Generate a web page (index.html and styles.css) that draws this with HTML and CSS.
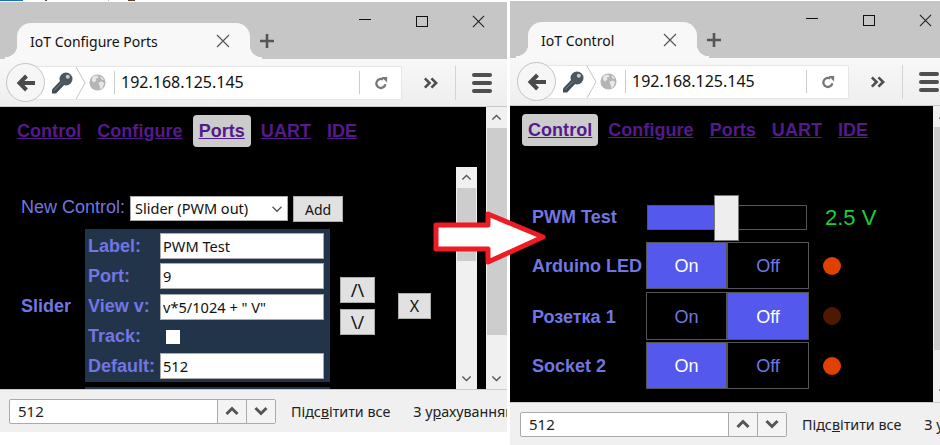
FILE: index.html
```html
<!DOCTYPE html>
<html lang="en">
<head>
  <meta charset="UTF-8">
  <title>IoT Control</title>
  <link rel="stylesheet" href="styles.css">
</head>
<body>
  <svg class="defs" width="0" height="0">
    <symbol id="i-x" viewBox="0 0 14 14"><path d="M1 1l12 12M13 1L1 13" fill="none" stroke="currentColor" stroke-width="1.2"/></symbol>
    <symbol id="i-plus" viewBox="0 0 16 16"><path d="M8 1v14M1 8h14" fill="none" stroke="currentColor" stroke-width="2.6"/></symbol>
    <symbol id="i-back" viewBox="0 0 20 20"><path d="M19 10H4M10.500 3l-7 7 7 7" fill="none" stroke="currentColor" stroke-width="4"/></symbol>
    <symbol id="i-key" viewBox="0 0 22 22"><path d="M10.500 7.500l4 4L5 21.500H1v-4z" fill="#414d55"/><circle cx="15" cy="7" r="6.500" fill="#4a5760"/><circle cx="16.800" cy="4.800" r="2" fill="#c3ccd3"/><path d="M3 18.500l8-8" stroke="#7c8a94" stroke-width="1"/></symbol>
    <symbol id="i-chevron" viewBox="0 0 11 32"><path d="M1 0l9 16L1 32" fill="none" stroke="#c4c4c4" stroke-width="1"/></symbol>
    <symbol id="i-globe" viewBox="0 0 18 18"><circle cx="9" cy="9" r="8.500" fill="#b5b5b5"/><path d="M4 3c2-1 4-1.500 5-1l1 2-3 1 1 2-3 2-2-2zM10 9l4-1 2 2-2 5-2 1-1-4zM12 2.500l3 2 .5 2-2.500-1z" fill="#e8e8e8"/></symbol>
    <symbol id="i-reload" viewBox="0 0 16 16"><path d="M13 9.500A5.200 5.200 0 1 1 10.500 4" fill="none" stroke="currentColor" stroke-width="2.600"/><path d="M8.500 1h6.500v6.500z" fill="currentColor"/></symbol>
    <symbol id="i-more" viewBox="0 0 16 12"><path d="M2 1l5 5-5 5M9 1l5 5-5 5" fill="none" stroke="currentColor" stroke-width="2.800"/></symbol>
    <symbol id="i-up" viewBox="0 0 16 10"><path d="M2 8l6-6 6 6" fill="none" stroke="currentColor" stroke-width="1.800"/></symbol>
    <symbol id="i-down" viewBox="0 0 16 10"><path d="M2 2l6 6 6-6" fill="none" stroke="currentColor" stroke-width="1.800"/></symbol>
    <symbol id="i-find-up" viewBox="0 0 14 10"><path d="M1.500 8L7 2.500 12.500 8" fill="none" stroke="currentColor" stroke-width="3"/></symbol>
    <symbol id="i-find-down" viewBox="0 0 14 10"><path d="M1.500 2L7 7.500 12.500 2" fill="none" stroke="currentColor" stroke-width="3"/></symbol>
  </svg>

  <div class="taskbar-sliver"></div>

  <div class="desktop">
    <!-- left window: configure ports -->
    <section class="window window-left">
      <div class="tabstrip">
        <div class="tab">
          <span class="tab-title">IoT Configure Ports</span>
          <svg class="tab-close"><use href="#i-x"/></svg>
        </div>
        <svg class="new-tab"><use href="#i-plus"/></svg>
        <div class="win-controls">
          <div class="win-btn"><span class="win-min"></span></div>
          <div class="win-btn"><span class="win-max"></span></div>
          <div class="win-btn"><svg class="win-close"><use href="#i-x"/></svg></div>
        </div>
      </div>
      <div class="toolbar">
        <div class="back"><svg><use href="#i-back"/></svg></div>
        <div class="urlbar">
          <svg class="key"><use href="#i-key"/></svg>
          <svg class="chevron"><use href="#i-chevron"/></svg>
          <svg class="globe"><use href="#i-globe"/></svg>
          <span class="url">192.168.125.145</span>
          <div class="reload"><svg><use href="#i-reload"/></svg></div>
        </div>
        <div class="more"><svg><use href="#i-more"/></svg></div>
        <div class="menu"><span></span><span></span><span></span></div>
      </div>
      <div class="content">
        <div class="page">
          <nav class="nav">
            <a href="#">Control</a>
            <a href="#">Configure</a>
            <a href="#" class="active">Ports</a>
            <a href="#">UART</a>
            <a href="#">IDE</a>
          </nav>
          <div class="scrollbox">
            <div class="scrollbox-body">
              <div class="new-control">
                <span>New Control:</span>
                <div class="select">Slider (PWM out)<svg><use href="#i-down"/></svg></div>
                <button class="btn btn-add">Add</button>
              </div>
              <div class="port">
                <b class="port-type">Slider</b>
                <div class="panel">
                  <label>Label:</label><input class="field" value="PWM Test">
                  <label>Port:</label><input class="field" value="9">
                  <label>View v:</label><input class="field" value='v*5/1024 + " V"'>
                  <label>Track:</label><span class="check"></span>
                  <label>Default:</label><input class="field" value="512">
                </div>
                <div class="move">
                  <button class="btn btn-move">/\</button>
                  <button class="btn btn-move">\/</button>
                </div>
                <button class="btn btn-del">X</button>
              </div>
              <div class="panel panel-next"></div>
            </div>
            <div class="scrollbar scrollbar-inner">
              <svg class="sb-arrow"><use href="#i-up"/></svg>
              <div class="sb-thumb"></div>
              <svg class="sb-arrow"><use href="#i-down"/></svg>
            </div>
          </div>
        </div>
        <div class="scrollbar scrollbar-page">
          <svg class="sb-arrow"><use href="#i-up"/></svg>
          <div class="sb-thumb"></div>
          <svg class="sb-arrow"><use href="#i-down"/></svg>
        </div>
      </div>
      <div class="findbar">
        <div class="find-box">
          <span class="find-text">512</span>
          <div class="find-btn"><svg><use href="#i-find-up"/></svg></div>
          <div class="find-btn"><svg><use href="#i-find-down"/></svg></div>
        </div>
        <span class="find-opt">Підс<u>в</u>ітити все</span>
        <span class="find-opt">З у<u>р</u>ахуванням</span>
      </div>
    </section>

    <!-- right window: control -->
    <section class="window window-right">
      <div class="tabstrip">
        <div class="tab">
          <span class="tab-title">IoT Control</span>
          <svg class="tab-close"><use href="#i-x"/></svg>
        </div>
        <svg class="new-tab"><use href="#i-plus"/></svg>
        <div class="win-controls">
          <div class="win-btn"><span class="win-min"></span></div>
          <div class="win-btn"><span class="win-max"></span></div>
          <div class="win-btn"><svg class="win-close"><use href="#i-x"/></svg></div>
        </div>
      </div>
      <div class="toolbar">
        <div class="back"><svg><use href="#i-back"/></svg></div>
        <div class="urlbar">
          <svg class="key"><use href="#i-key"/></svg>
          <svg class="chevron"><use href="#i-chevron"/></svg>
          <svg class="globe"><use href="#i-globe"/></svg>
          <span class="url">192.168.125.145</span>
          <div class="reload"><svg><use href="#i-reload"/></svg></div>
        </div>
        <div class="more"><svg><use href="#i-more"/></svg></div>
        <div class="menu"><span></span><span></span><span></span></div>
      </div>
      <div class="content">
        <div class="page">
          <nav class="nav">
            <a href="#" class="active">Control</a>
            <a href="#">Configure</a>
            <a href="#">Ports</a>
            <a href="#">UART</a>
            <a href="#">IDE</a>
          </nav>
          <div class="controls">
            <div class="row row-slider">
              <b class="row-label">PWM Test</b>
              <div class="slider">
                <div class="slider-fill"></div>
                <div class="slider-thumb"></div>
              </div>
              <span class="value">2.5 V</span>
            </div>
            <div class="row row-gap3">
              <b class="row-label">Arduino LED</b>
              <div class="toggle"><span class="on">On</span><span>Off</span></div>
              <span class="dot"></span>
            </div>
            <div class="row row-gap2 row-tall">
              <b class="row-label">Розетка 1</b>
              <div class="toggle"><span>On</span><span class="on">Off</span></div>
              <span class="dot dot-off"></span>
            </div>
            <div class="row">
              <b class="row-label">Socket 2</b>
              <div class="toggle"><span class="on">On</span><span>Off</span></div>
              <span class="dot"></span>
            </div>
          </div>
        </div>
        <div class="scrollbar scrollbar-right">
          <svg class="sb-arrow"><use href="#i-up"/></svg>
          <div class="sb-thumb"></div>
          <svg class="sb-arrow"><use href="#i-down"/></svg>
        </div>
      </div>
      <div class="findbar">
        <div class="find-box">
          <span class="find-text">512</span>
          <div class="find-btn"><svg><use href="#i-find-up"/></svg></div>
          <div class="find-btn"><svg><use href="#i-find-down"/></svg></div>
        </div>
        <span class="find-opt">Підс<u>в</u>ітити все</span>
        <span class="find-opt">З у<u>р</u>ахуванням</span>
      </div>
    </section>
  </div>

  <svg class="arrow" width="116" height="60" viewBox="0 0 116 60">
    <path d="M3 15H55V4L110 27 55 52V39H3z" fill="#fff" stroke="#ed1c24" stroke-width="5" stroke-linejoin="round"/>
  </svg>
</body>
</html>
```

FILE: styles.css
```css
html, body {
  margin: 0;
  height: 100%;
  overflow: hidden;
  background: #fff;
}
body {
  font-family: 'Noto Sans', 'Open Sans', sans-serif;
}
.defs {
  position: absolute;
}
/* edge of whatever sits behind the windows */
.taskbar-sliver {
  position: absolute;
  left: 0;
  top: 0;
  width: 135px;
  height: 1px;
  background: linear-gradient(90deg, #1a6fc0 23px, #fff 23px, #fff 45px, #5a4030 45px, #5a4030 47px, #fff 47px, #fff 108px, #bbb 108px, #bbb 109px, #fff 109px, #fff 128px, #5a4030 128px);
}
.desktop {
  display: flex;
  gap: 3px;
  height: 445px;
}
.window {
  flex: none;
  display: flex;
  flex-direction: column;
}
.window-left {
  --shift: 0px;
  --tab-width: 233px;
  width: 507px;
  height: 430px;
  margin-top: 2px;
}
.window-right {
  --shift: 1px;
  --tab-width: 169px;
  width: 444px;
  height: 444px;
  margin-top: 1px;
}

/* tab strip */
.tabstrip {
  flex: none;
  height: 57px;
  display: flex;
  align-items: flex-end;
  background: #c6c6c6;
  padding-left: calc(17px + var(--shift));
}
.tab {
  position: relative;
  box-sizing: border-box;
  width: var(--tab-width);
  height: 36px;
  padding: 0 20px 0 13px;
  display: flex;
  align-items: center;
  background: #f8f8f8;
  border-radius: 14px 14px 0 0;
  color: #111;
  font-size: 14px;
}
.tab::before,
.tab::after {
  content: '';
  position: absolute;
  bottom: 0;
  width: 12px;
  height: 14px;
}
.tab::before {
  left: -12px;
  background: radial-gradient(circle at 0 0, transparent 12px, #f8f8f8 12.5px);
}
.tab::after {
  right: -12px;
  background: radial-gradient(circle at 100% 0, transparent 12px, #f8f8f8 12.5px);
}
.tab-close {
  width: 14px;
  height: 14px;
  margin-left: auto;
  color: #555;
}
.new-tab {
  width: 16px;
  height: 16px;
  margin: 0 0 10px 9px;
  color: #555;
}
.win-controls {
  display: flex;
  align-self: flex-start;
  margin-left: auto;
}
.win-btn {
  width: 57px;
  height: 38px;
  display: flex;
  align-items: center;
  justify-content: center;
}
.win-min {
  width: 12px;
  height: 1px;
  margin-bottom: 3px;
  background: #111;
}
.win-max {
  box-sizing: border-box;
  width: 12px;
  height: 11px;
  border: 1px solid #111;
}
.win-close {
  width: 13px;
  height: 13px;
  color: #222;
}

/* toolbar */
.toolbar {
  flex: none;
  box-sizing: border-box;
  height: 48px;
  display: flex;
  align-items: center;
  padding-left: calc(6px + var(--shift));
  background: linear-gradient(#f8f8f8, #eeeeee);
  border-bottom: 1px solid #c8c8c8;
}
.back {
  position: relative;
  z-index: 1;
  box-sizing: border-box;
  flex: none;
  width: 39px;
  height: 39px;
  display: flex;
  align-items: center;
  justify-content: center;
  background: #f6f6f6;
  border: 1px solid #c4c4c4;
  border-radius: 50%;
  color: #4a4a4a;
}
.back svg {
  width: 20px;
  height: 20px;
}
.urlbar {
  flex: 1;
  box-sizing: border-box;
  height: 34px;
  margin-left: -14px;
  padding-left: 19px;
  display: flex;
  align-items: center;
  background: #fff;
  border: 1px solid #e6e6e6;
  border-radius: 2px;
}
.key {
  flex: none;
  width: 22px;
  height: 22px;
}
.chevron {
  flex: none;
  width: 11px;
  height: 32px;
  margin-left: 2px;
}
.globe {
  flex: none;
  width: 17px;
  height: 17px;
  margin-left: 3px;
}
.url {
  flex: 1;
  margin-left: 8px;
  padding-left: 6px;
  border-left: 1px solid #ccc;
  color: #111;
  font-size: 16px;
  line-height: 23px;
}
.reload {
  flex: none;
  box-sizing: border-box;
  width: 42px;
  height: 23px;
  display: flex;
  align-items: center;
  justify-content: center;
  border-left: 1px solid #ccc;
  color: #777;
}
.reload svg {
  width: 14px;
  height: 14px;
}
.more {
  flex: none;
  box-sizing: border-box;
  width: 54px;
  height: 34px;
  padding-left: 21px;
  display: flex;
  align-items: center;
  border-right: 1px solid #d4d4d4;
  color: #4f4f4f;
}
.more svg {
  width: 15px;
  height: 12px;
}
.menu {
  flex: none;
  width: 51px;
  display: flex;
  flex-direction: column;
  align-items: center;
  gap: 4px;
}
.menu span {
  width: 20px;
  height: 4px;
  border-radius: 2px;
  background: #4f4f4f;
}

/* page */
.content {
  flex: 1;
  min-height: 0;
  display: flex;
  background: #000;
}
.page {
  flex: 1;
  min-width: 0;
  padding-top: 8px;
  font-family: 'Liberation Sans', Arial, sans-serif;
  color: #7276e2;
}
.nav {
  display: flex;
  gap: 4px;
  padding-left: calc(11px + var(--shift));
  font-size: 18px;
  font-weight: bold;
  letter-spacing: .04px;
}
.nav a {
  padding: 5px 6px;
  height: 22px;
  line-height: 22px;
  border-radius: 4px;
  color: #551a8b;
}
.nav a.active {
  background: #cccccc;
}

/* configure ports form */
.scrollbox {
  display: flex;
  width: 477px;
  height: 222px;
  margin-top: 20px;
  overflow: hidden;
}
.scrollbox-body {
  flex: 1;
  min-width: 0;
  padding-top: 29px;
}
.new-control {
  display: flex;
  align-items: flex-start;
  padding-left: 21px;
  font-size: 18px;
  line-height: 23px;
}
.select {
  box-sizing: border-box;
  width: 158px;
  height: 25px;
  margin-left: 5px;
  padding-left: 4px;
  display: flex;
  align-items: center;
  justify-content: space-between;
  background: #fff;
  border: 1px solid #aaa;
  color: #111;
  font-family: 'Noto Sans', sans-serif;
  font-size: 14.5px;
}
.select svg {
  width: 12px;
  height: 8px;
  margin-right: 4px;
  color: #555;
}
.btn {
  box-sizing: border-box;
  padding: 0;
  background: #e1e1e1;
  border: 1px solid #adadad;
  color: #111;
  font-family: 'Noto Sans', sans-serif;
  font-size: 14px;
}
.btn-add {
  width: 50px;
  height: 26px;
  margin-left: 5px;
}
.port {
  display: flex;
  align-items: center;
  margin-top: 7px;
  padding-left: 21px;
}
.port-type {
  width: 64px;
  padding-top: 2px;
  font-size: 18px;
}
.panel {
  box-sizing: border-box;
  width: 245px;
  padding: 4px 6px 3px 3px;
  display: grid;
  grid-template-columns: 72px 164px;
  grid-template-rows: 26px 26px 27px 25px 26px;
  row-gap: 4px;
  align-items: end;
  background: #22344a;
  font-size: 18px;
  font-weight: bold;
}
.panel label {
  align-self: center;
}
.panel-next {
  display: block;
  height: 20px;
  margin: 5px 0 0 85px;
}
.field {
  box-sizing: border-box;
  width: 164px;
  height: 26px;
  padding: 0 2px;
  background: #fff;
  border: 1px solid #aaa;
  border-radius: 0;
  color: #111;
  font-family: 'Noto Sans', sans-serif;
  font-size: 14.6px;
}
.check {
  align-self: center;
  width: 14px;
  height: 14px;
  margin-left: 6px;
  background: #fff;
}
.move {
  display: flex;
  flex-direction: column;
  gap: 6px;
  margin-left: 10px;
}
.btn-move {
  width: 35px;
  height: 26px;
  font-size: 18px;
  line-height: 1;
}
.btn-del {
  width: 33px;
  height: 26px;
  margin-left: 23px;
  font-size: 16px;
}

/* scrollbars */
.scrollbar {
  flex: none;
  width: 21px;
  display: flex;
  flex-direction: column;
  background: #f0f0f0;
  color: #555;
}
.sb-arrow {
  flex: none;
  width: 21px;
  height: 21px;
  padding: 6px 5px;
  box-sizing: border-box;
}
.sb-thumb {
  flex: none;
  margin: 0 0 auto 1px;
  background: #cdcdcd;
}
.scrollbar-page .sb-thumb {
  height: 207px;
}
.scrollbar-inner .sb-thumb {
  width: 19px;
  height: 73px;
}
.scrollbar-right .sb-thumb {
  height: 223px;
}

/* control page */
.controls {
  margin-top: 49px;
  padding-left: 22px;
}
.row {
  display: flex;
  align-items: center;
  height: 47px;
}
.row-slider {
  box-sizing: border-box;
  padding-bottom: 2px;
}
.row-gap3 {
  margin-bottom: 3px;
}
.row-gap2 {
  margin-bottom: 2px;
}
.row-tall {
  height: 48px;
}
.row-label {
  flex: none;
  box-sizing: border-box;
  width: 114px;
  padding-top: 2px;
  font-size: 18px;
}
.row-slider .row-label {
  padding-top: 0;
}
.slider {
  position: relative;
  flex: none;
  box-sizing: border-box;
  width: 160px;
  height: 25px;
  margin: 0 2px 0 1px;
  background: #000;
  border: 1px solid #555;
}
.slider-fill {
  width: 67px;
  height: 100%;
  background: #5558ec;
}
.slider-thumb {
  position: absolute;
  top: -11px;
  left: 66px;
  box-sizing: border-box;
  width: 25px;
  height: 46px;
  background: #eeeeee;
  border: 1px solid #777;
}
.value {
  margin-left: 16px;
  color: #16d03e;
  font-size: 22px;
}
.toggle {
  flex: none;
  width: 163px;
  height: 100%;
  display: flex;
  font-size: 18px;
}
.toggle span {
  flex: 1;
  box-sizing: border-box;
  padding-top: 2px;
  display: flex;
  align-items: center;
  justify-content: center;
  border: 1px solid #555;
}
.toggle span:first-child {
  flex: 0 0 81px;
}
.toggle .on {
  background: #5558ec;
  color: #fff;
}
.dot {
  flex: none;
  width: 18px;
  height: 18px;
  margin-left: 14px;
  border-radius: 50%;
  background: #e04000;
}
.dot-off {
  background: #4d1a00;
}

/* find bar */
.findbar {
  flex: none;
  box-sizing: border-box;
  height: 43px;
  padding-left: calc(9px + var(--shift));
  display: flex;
  align-items: center;
  overflow: hidden;
  white-space: nowrap;
  background: #f0f0f0;
  border-top: 1px solid #cccccc;
  color: #222;
  font-size: 14.3px;
}
.find-box {
  flex: none;
  box-sizing: border-box;
  width: 267px;
  height: 25px;
  display: flex;
  align-items: center;
  background: #fff;
  border: 1px solid #aaa;
  border-radius: 2px;
}
.find-text {
  flex: 1;
  padding-left: 8px;
  font-size: 15px;
}
.find-btn {
  flex: none;
  box-sizing: border-box;
  width: 29px;
  height: 100%;
  display: flex;
  align-items: center;
  justify-content: center;
  border-left: 1px solid #aaa;
  background: #f4f4f4;
  color: #555;
}
.find-btn svg {
  width: 14px;
  height: 10px;
}
.find-opt {
  flex: none;
  margin-left: 15px;
}
.find-opt + .find-opt {
  margin-left: 23px;
}

/* red arrow across the two windows */
.arrow {
  position: absolute;
  left: 433px;
  top: 210px;
}
```
